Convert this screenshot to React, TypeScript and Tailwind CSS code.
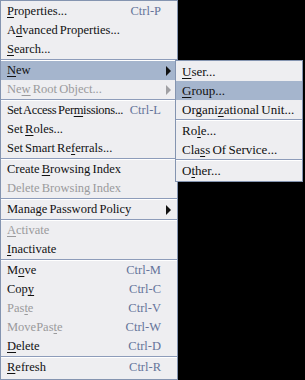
type Item =
  | { sep: true }
  | {
      sep?: false;
      label: string;
      mn?: number;
      key?: string;
      disabled?: boolean;
      arrow?: boolean;
      active?: boolean;
      tight?: boolean;
    };

const mainItems: Item[] = [
  { label: "Properties...", mn: 0, key: "Ctrl-P" },
  { label: "Advanced Properties...", mn: 1 },
  { label: "Search...", mn: 0 },
  { sep: true },
  { label: "New", mn: 0, arrow: true, active: true },
  { label: "New Root Object...", mn: 2, arrow: true, disabled: true },
  { sep: true },
  { label: "Set Access Permissions...", mn: 14, key: "Ctrl-L", tight: true },
  { label: "Set Roles...", mn: 4 },
  { label: "Set Smart Referrals...", mn: 12 },
  { sep: true },
  { label: "Create Browsing Index", mn: 7 },
  { label: "Delete Browsing Index", disabled: true },
  { sep: true },
  { label: "Manage Password Policy", arrow: true },
  { sep: true },
  { label: "Activate", mn: 0, disabled: true },
  { label: "Inactivate", mn: 0 },
  { sep: true },
  { label: "Move", mn: 1, key: "Ctrl-M" },
  { label: "Copy", mn: 3, key: "Ctrl-C" },
  { label: "Paste", mn: 3, key: "Ctrl-V", disabled: true },
  { label: "MovePaste", mn: 7, key: "Ctrl-W", disabled: true },
  { label: "Delete", mn: 0, key: "Ctrl-D" },
  { sep: true },
  { label: "Refresh", mn: 0, key: "Ctrl-R" },
];

const subItems: Item[] = [
  { label: "User...", mn: 0 },
  { label: "Group...", mn: 0, active: true },
  { label: "Organizational Unit...", mn: 6 },
  { sep: true },
  { label: "Role...", mn: 2 },
  { label: "Class Of Service...", mn: 3 },
  { sep: true },
  { label: "Other...", mn: 1 },
];

function Label({ text, mn }: { text: string; mn?: number }) {
  if (mn === undefined) return <span>{text}</span>;
  return (
    <span>
      {text.slice(0, mn)}
      <u className="underline underline-offset-2">{text[mn]}</u>
      {text.slice(mn + 1)}
    </span>
  );
}

function Menu({ items }: { items: Item[] }) {
  return (
    <>
      {items.map((it, i) =>
        it.sep ? (
          <div key={i} className="h-[2px] border-t border-[#8d9cba] bg-white" />
        ) : (
          <div
            key={i}
            className={`relative h-[19px] flex items-center pl-[6px] whitespace-nowrap ${
              it.active ? "bg-[#a5b5cd]" : ""
            } ${it.disabled ? "text-[#9a9a9c]" : "text-[#111]"}`}
          >
            <span className={it.tight ? "tracking-[-0.35px]" : ""}>
              <Label text={it.label} mn={it.mn} />
            </span>
            {it.key && (
              <span className="absolute right-[16px] text-[#65749a]">{it.key}</span>
            )}
            {it.arrow && (
              <svg width="6" height="10" viewBox="0 0 6 10" className="absolute right-[5px]">
                <path d="M0 0 L5 5 L0 10 Z" fill={it.disabled ? "#a0a0a4" : "#111"} />
              </svg>
            )}
          </div>
        )
      )}
    </>
  );
}

export default function App() {
  return (
    <div className="relative w-[305px] h-[380px] bg-black overflow-hidden text-[12.5px] leading-none font-['Liberation_Serif',serif] [word-spacing:-1px]">
      {/* main popup */}
      <div className="w-[178px] h-[380px] bg-[#eeeef1] border border-[#8494b0] pt-[1px]">
        <Menu items={mainItems} />
      </div>

      {/* New submenu */}
      <div className="absolute left-[175px] top-[60px] w-[128px] h-[122px] bg-[#eeeef1] border border-[#8494b0] pt-[1px] text-[13px]">
        <Menu items={subItems} />
      </div>
    </div>
  );
}
